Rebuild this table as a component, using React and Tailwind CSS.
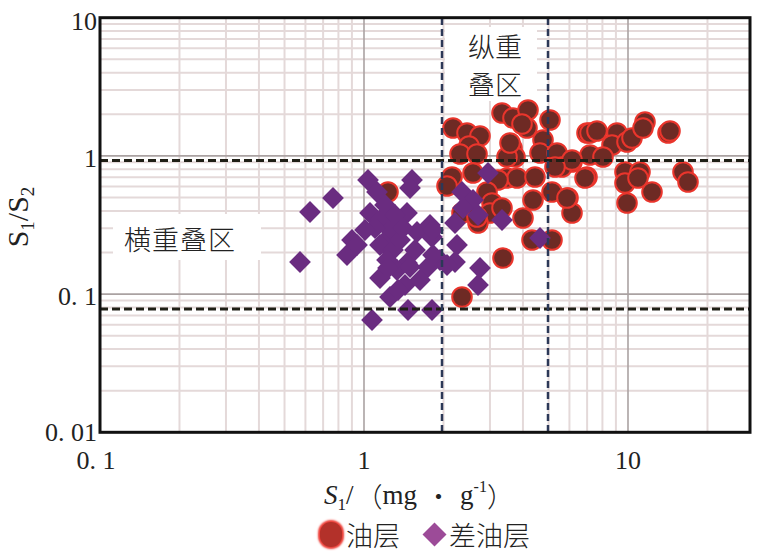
import React from "react";

const lx = (v) => 100 + 264 * (Math.log10(v) + 1);
const ly = (v) => 155.9 - 138.2 * Math.log10(v);

const R = [
  [453,128],[467,133],[480,136],[469,146],[460,154],[477,154],
  [502,113],[513,118],[528,110],[527,128],[522,124],[550,120],[543,140],[512,148],[515,157],[507,157],[540,153],[557,153],[572,162],[562,167],
  [587,133],[590,133],[597,131],[617,133],[612,145],[627,142],[632,138],[645,122],[643,128],[668,133],[670,131],
  [590,155],[603,157],[572,160],[587,177],[625,172],[640,172],[625,183],[638,178],[652,192],[627,203],[683,172],[688,182],[568,198],[572,213],
  [452,177],[473,173],[507,178],[517,178],[535,177],[498,180],[585,178],
  [487,192],[492,203],[490,213],[478,223],[503,258],[462,297],[533,200],[523,218],[532,240],[552,240],[552,192],[567,198],
  [447,186],[388,192],[462,213],[477,217],[502,208],[555,167],[510,143]
];

const D = [
  [300,262],[310,212],[333,198],[368,180],[377,192],[412,180],[410,188],[370,213],[352,240],[347,255],[357,245],[380,220],[390,230],[383,243],[407,213],[417,232],[430,225],[432,237],[380,245],[393,250],[407,263],[397,270],[387,260],[380,278],[410,267],[405,285],[390,297],[408,310],[432,310],[372,320],[428,267],[440,260],
  [385,205],[395,215],[375,228],[400,240],[415,250],[398,290],[420,280],[365,230],[388,268],[403,228],
  [462,192],[473,200],[463,208],[478,215],[455,223],[502,220],[488,173],[457,245],[455,262],[447,265],[480,268],[478,285],[540,238],[433,230],[433,255]
];

function Chart() {
  const vLines = [];
  [0.1, 1, 10].forEach((d) => {
    for (let m = 1; m <= 9; m++) {
      const x = lx(d * m);
      if (x > 101 && x < 749) vLines.push({ x, major: m === 1 });
    }
  });
  const hLines = [];
  [0.01, 0.1, 1].forEach((d) => {
    for (let m = 1; m <= 9; m++) {
      const y = ly(d * m);
      if (y > 19 && y < 431) hLines.push({ y, major: m === 1 });
    }
  });
  const serif = "'Liberation Serif', 'Noto Sans CJK SC', serif";
  const cjk = "'Noto Sans CJK SC', sans-serif";
  return (
    <svg width="768" height="474" viewBox="0 0 768 474" className="block">
      {hLines.filter(l => !l.major).map((l, i) => (
        <line key={"h" + i} x1="100" x2="750" y1={l.y} y2={l.y} stroke="#e4d9d9" strokeWidth="2" />
      ))}
      {vLines.filter(l => !l.major).map((l, i) => (
        <line key={"v" + i} y1="18" y2="432" x1={l.x} x2={l.x} stroke="#e4d9d9" strokeWidth="2" />
      ))}
      {hLines.filter(l => l.major).map((l, i) => (
        <line key={"hm" + i} x1="100" x2="750" y1={l.y} y2={l.y} stroke="#aaa2a2" strokeWidth="1.6" />
      ))}
      {vLines.filter(l => l.major).map((l, i) => (
        <line key={"vm" + i} y1="18" y2="432" x1={l.x} x2={l.x} stroke="#aaa2a2" strokeWidth="1.6" />
      ))}
      <rect x="445" y="27" width="92" height="74" fill="#ffffff" />
      <rect x="113" y="214" width="148" height="46" fill="#ffffff" />
      {R.map(([x, y], i) => (
        <circle key={"r" + i} cx={x} cy={y} r="9.8" fill="#6e2a24" stroke="#ea352c" strokeWidth="2" />
      ))}
      {D.map(([x, y], i) => (
        <rect key={"d" + i} x={x - 7.7} y={y - 7.7} width="15.4" height="15.4" fill="#6a2c80" transform={`rotate(45 ${x} ${y})`} />
      ))}
      <line x1="100" x2="750" y1="160.5" y2="160.5" stroke="#1f1f16" strokeWidth="3" strokeDasharray="8 4" />
      <line x1="100" x2="750" y1="309" y2="309" stroke="#1f1f16" strokeWidth="3" strokeDasharray="8 4" />
      <line x1="442" x2="442" y1="18" y2="432" stroke="#2c3857" strokeWidth="2.5" strokeDasharray="7 4" />
      <line x1="548" x2="548" y1="18" y2="432" stroke="#2c3857" strokeWidth="2.5" strokeDasharray="7 4" />
      <rect x="100" y="17.7" width="650" height="414.6" fill="none" stroke="#111" strokeWidth="3" />
      <text x="495" y="45" textAnchor="middle" dominantBaseline="central" fontFamily={cjk} fontWeight="300" fontSize="27" fill="#222">纵重</text>
      <text x="495" y="83" textAnchor="middle" dominantBaseline="central" fontFamily={cjk} fontWeight="300" fontSize="27" fill="#222">叠区</text>
      <text x="180" y="238" textAnchor="middle" dominantBaseline="central" fontFamily={cjk} fontWeight="300" fontSize="27" letterSpacing="1" fill="#222">横重叠区</text>
      <text x="97" y="21" textAnchor="end" dominantBaseline="central" fontFamily={serif} fontSize="26" fill="#222">10</text>
      <text x="97" y="158" textAnchor="end" dominantBaseline="central" fontFamily={serif} fontSize="26" fill="#222">1</text>
      <text x="97" y="296" textAnchor="end" dominantBaseline="central" fontFamily={serif} fontSize="26" fill="#222">0. 1</text>
      <text x="97" y="432" textAnchor="end" dominantBaseline="central" fontFamily={serif} fontSize="26" fill="#222">0. 01</text>
      <text x="96" y="460" textAnchor="middle" dominantBaseline="central" fontFamily={serif} fontSize="26" fill="#222">0. 1</text>
      <text x="364" y="460" textAnchor="middle" dominantBaseline="central" fontFamily={serif} fontSize="26" fill="#222">1</text>
      <text x="628" y="460" textAnchor="middle" dominantBaseline="central" fontFamily={serif} fontSize="26" fill="#222">10</text>
      <text transform="translate(28 217) rotate(-90)" textAnchor="middle" fontFamily={serif} fontSize="30" fill="#222">
        S<tspan fontSize="19" dy="6">1</tspan><tspan dy="-6">/S</tspan><tspan fontSize="19" dy="6">2</tspan>
      </text>
    </svg>
  );
}

export default function App() {
  const cjkStyle = { fontFamily: "'Noto Sans CJK SC', sans-serif" };
  return (
    <div className="w-[768px] h-[556px] bg-white overflow-hidden flex flex-col text-[#222]">
      <Chart />
      <div className="h-[42px] flex items-center justify-center pl-[70px] text-[27px] leading-none" style={{ fontFamily: "'Liberation Serif', 'Noto Sans CJK SC', serif" }}>
        <span className="italic">S</span>
        <span className="text-[17px] self-end mb-[3px]">1</span>
        <span>/</span>
        <span className="font-light ml-[2px]" style={cjkStyle}>（</span>
        <span>mg</span>
        <span className="font-light px-[8px]" style={cjkStyle}>•</span>
        <span>g</span>
        <span className="text-[16px] self-start mt-[5px]">-1</span>
        <span className="font-light" style={cjkStyle}>）</span>
      </div>
      <div className="h-[36px] flex items-center justify-center pl-[82px] text-[27px] leading-none font-light" style={cjkStyle}>
        <span className="w-[22px] h-[25px] rounded-full bg-[#b3312a] shadow-[0_0_2px_2px_#ec3b34] mr-[4px]" />
        <span>油层</span>
        <span className="w-[17px] h-[17px] rotate-45 bg-[#9c4b98] ml-[26px] mr-[6px]" />
        <span>差油层</span>
      </div>
    </div>
  );
}
